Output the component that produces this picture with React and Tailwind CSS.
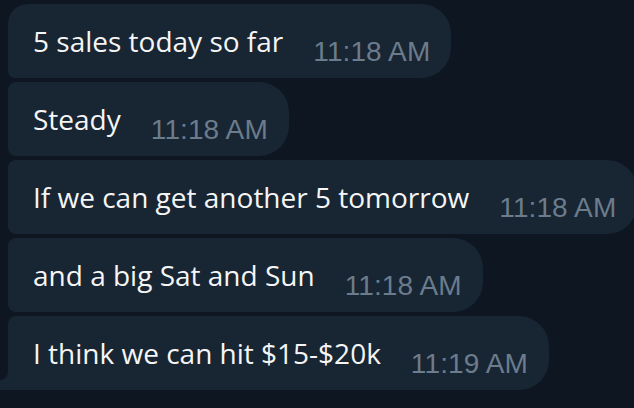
export default function App() {
  const msgs = [
    { text: "5 sales today so far", time: "11:18 AM", pos: "first" },
    { text: "Steady", time: "11:18 AM", pos: "mid" },
    { text: "If we can get another 5 tomorrow", time: "11:18 AM", pos: "mid" },
    { text: "and a big Sat and Sun", time: "11:18 AM", pos: "mid" },
    { text: "I think we can hit $15-$20k", time: "11:19 AM", pos: "last" },
  ];
  const radius = {
    first: "rounded-tl-[20px] rounded-bl-[7px]",
    mid: "rounded-l-[8px]",
    last: "rounded-tl-[8px] rounded-bl-none",
  };
  return (
    <div className="w-[634px] h-[408px] bg-[#0e1621] overflow-hidden pt-[4px] pl-[8px] flex flex-col gap-[4px]">
      {msgs.map((m, i) => (
        <div
          key={i}
          className={`relative self-start flex items-end h-[74px] bg-[#182533] rounded-r-[30px] pl-[25px] pr-[21px] ${radius[m.pos]}`}
        >
          <span
            className="mb-[23px] text-[28px] leading-none text-[#f5f5f5] whitespace-nowrap"
            style={{ fontFamily: '"Open Sans", sans-serif' }}
          >
            {m.text}
          </span>
          <span
            className="ml-[30px] mb-[12px] text-[28px] tracking-[0.1px] leading-none text-[#6b7c8c] whitespace-nowrap"
            style={{ fontFamily: '"Liberation Sans", Arial, sans-serif' }}
          >
            {m.time}
          </span>
          {m.pos === "last" && (
            <svg
              className="absolute left-[-8px] bottom-0"
              width="8"
              height="18"
              viewBox="0 0 8 18"
            >
              <path d="M8 0 A8 8 0 0 1 0 8 L0 18 L8 18 Z" fill="#182533" />
            </svg>
          )}
        </div>
      ))}
    </div>
  );
}
